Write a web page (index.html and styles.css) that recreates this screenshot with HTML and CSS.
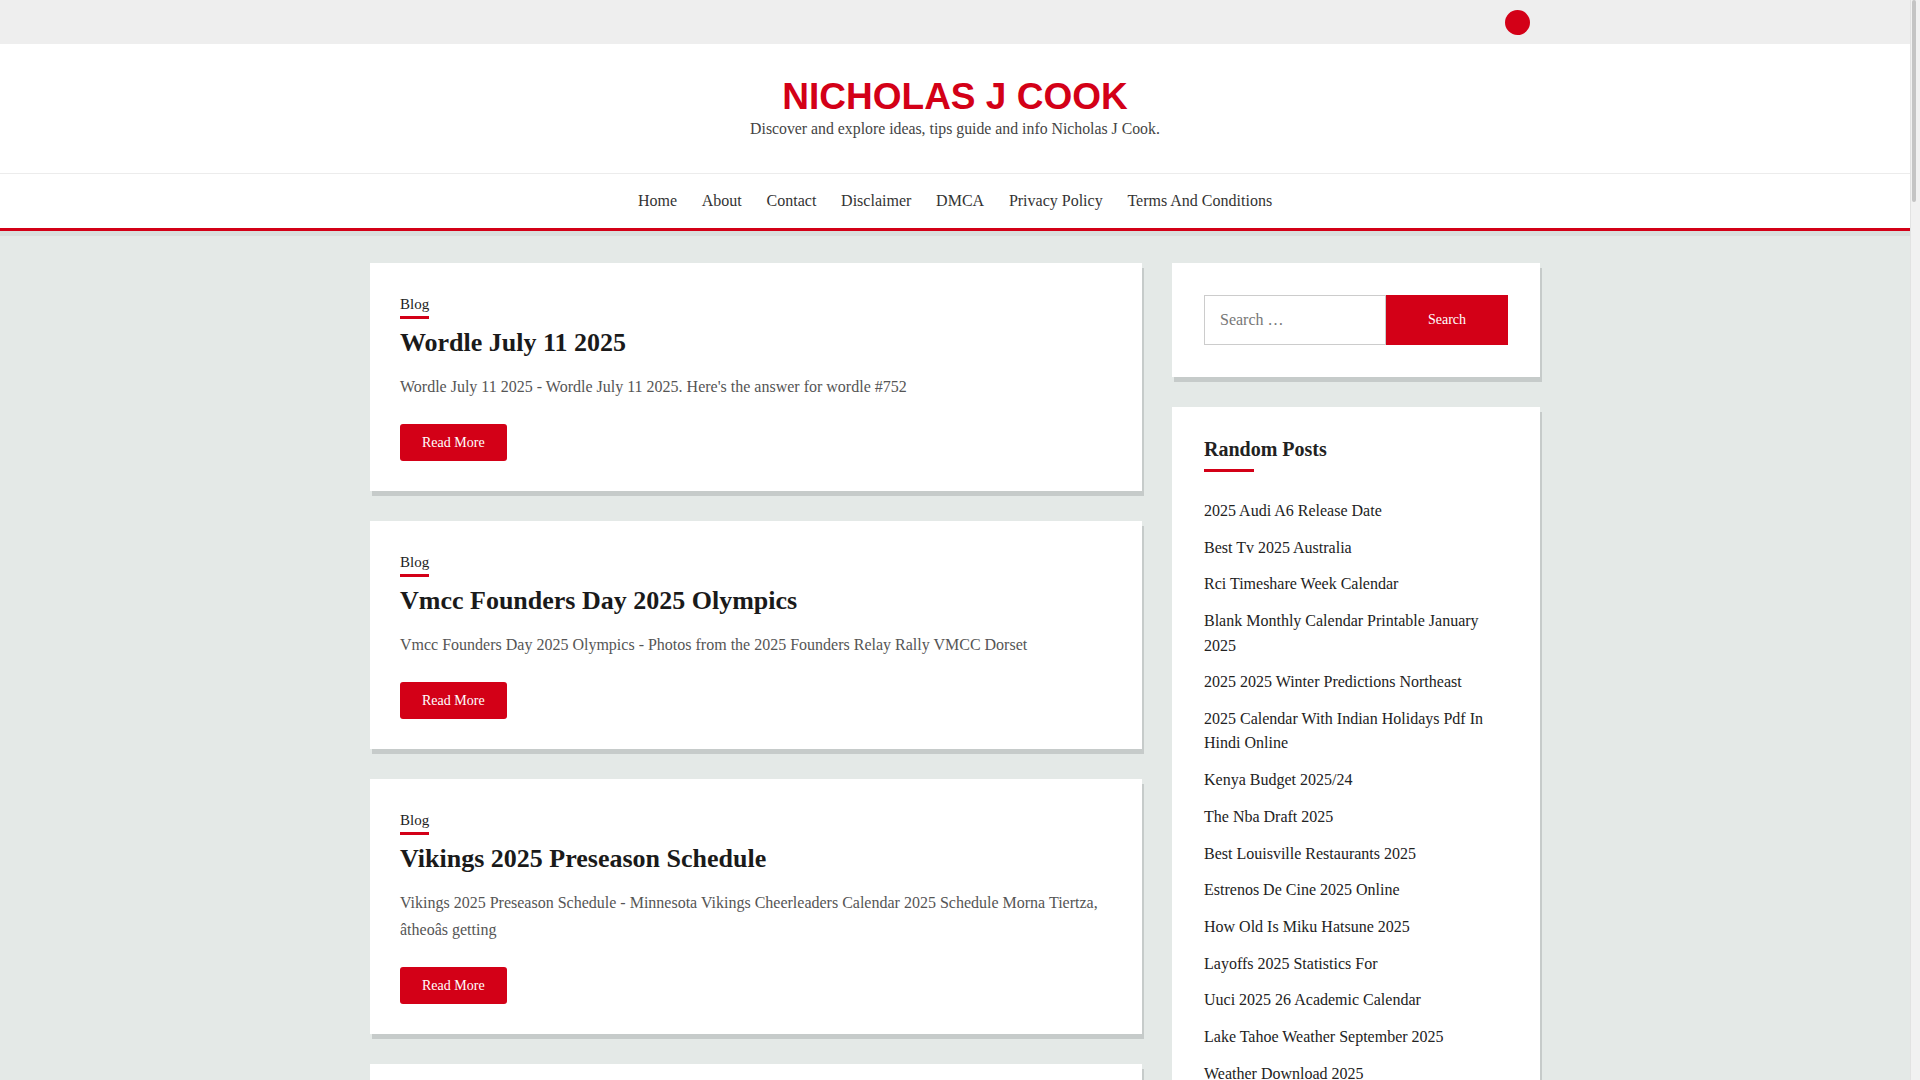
FILE: index.html
```html
<!DOCTYPE html>
<html lang="en">
<head>
<meta charset="utf-8">
<title>Nicholas J Cook</title>
<link rel="stylesheet" href="styles.css">
</head>
<body>
<div class="scrollbar"><span class="scroll-thumb"></span></div>
<div class="topbar">
  <div class="container topbar-inner">
    <span class="dot"></span>
  </div>
</div>
<header class="site-header">
  <h1 class="site-title">NICHOLAS J COOK</h1>
  <p class="site-desc">Discover and explore ideas, tips guide and info Nicholas J Cook.</p>
</header>
<nav class="main-nav">
  <ul>
    <li><a href="#">Home</a></li>
    <li><a href="#">About</a></li>
    <li><a href="#">Contact</a></li>
    <li><a href="#">Disclaimer</a></li>
    <li><a href="#">DMCA</a></li>
    <li><a href="#">Privacy Policy</a></li>
    <li><a href="#">Terms And Conditions</a></li>
  </ul>
</nav>
<div class="container content">
  <main class="posts">
    <article class="card post">
      <div class="meta"><a class="cat" href="#">Blog</a></div>
      <h2 class="post-title">Wordle July 11 2025</h2>
      <p class="excerpt">Wordle July 11 2025 - Wordle July 11 2025. Here's the answer for wordle #752</p>
      <div class="actions"><a class="btn" href="#">Read More</a></div>
    </article>
    <article class="card post">
      <div class="meta"><a class="cat" href="#">Blog</a></div>
      <h2 class="post-title">Vmcc Founders Day 2025 Olympics</h2>
      <p class="excerpt">Vmcc Founders Day 2025 Olympics - Photos from the 2025 Founders Relay Rally VMCC Dorset</p>
      <div class="actions"><a class="btn" href="#">Read More</a></div>
    </article>
    <article class="card post">
      <div class="meta"><a class="cat" href="#">Blog</a></div>
      <h2 class="post-title">Vikings 2025 Preseason Schedule</h2>
      <p class="excerpt">Vikings 2025 Preseason Schedule - Minnesota Vikings Cheerleaders Calendar 2025 Schedule Morna Tiertza, âtheoâs getting</p>
      <div class="actions"><a class="btn" href="#">Read More</a></div>
    </article>
    <article class="card post">
      <div class="meta"><a class="cat" href="#">Blog</a></div>
      <h2 class="post-title">Nfl Week 1 Schedule 2025</h2>
      <p class="excerpt">Nfl Week 1 Schedule 2025 - Full schedule, kickoff times and TV channels for every game</p>
      <div class="actions"><a class="btn" href="#">Read More</a></div>
    </article>
    <article class="card post">
      <div class="meta"><a class="cat" href="#">Blog</a></div>
      <h2 class="post-title">Best Tv 2025 Australia</h2>
      <p class="excerpt">Best Tv 2025 Australia - The best TVs you can buy in Australia this year</p>
      <div class="actions"><a class="btn" href="#">Read More</a></div>
    </article>
    <article class="card post">
      <div class="meta"><a class="cat" href="#">Blog</a></div>
      <h2 class="post-title">Kenya Budget 2025/24</h2>
      <p class="excerpt">Kenya Budget 2025/24 - Highlights of the budget statement read in parliament</p>
      <div class="actions"><a class="btn" href="#">Read More</a></div>
    </article>
    <article class="card post">
      <div class="meta"><a class="cat" href="#">Blog</a></div>
      <h2 class="post-title">The Nba Draft 2025</h2>
      <p class="excerpt">The Nba Draft 2025 - Mock draft, prospects and the full order of picks</p>
      <div class="actions"><a class="btn" href="#">Read More</a></div>
    </article>
    <article class="card post">
      <div class="meta"><a class="cat" href="#">Blog</a></div>
      <h2 class="post-title">Best Louisville Restaurants 2025</h2>
      <p class="excerpt">Best Louisville Restaurants 2025 - Where to eat in Louisville right now</p>
      <div class="actions"><a class="btn" href="#">Read More</a></div>
    </article>
    <article class="card post">
      <div class="meta"><a class="cat" href="#">Blog</a></div>
      <h2 class="post-title">Estrenos De Cine 2025 Online</h2>
      <p class="excerpt">Estrenos De Cine 2025 Online - Las películas más esperadas del año</p>
      <div class="actions"><a class="btn" href="#">Read More</a></div>
    </article>
    <article class="card post">
      <div class="meta"><a class="cat" href="#">Blog</a></div>
      <h2 class="post-title">How Old Is Miku Hatsune 2025</h2>
      <p class="excerpt">How Old Is Miku Hatsune 2025 - Everything you need to know about the virtual singer</p>
      <div class="actions"><a class="btn" href="#">Read More</a></div>
    </article>
    <article class="card post">
      <div class="meta"><a class="cat" href="#">Blog</a></div>
      <h2 class="post-title">Layoffs 2025 Statistics For</h2>
      <p class="excerpt">Layoffs 2025 Statistics For - Tracking layoffs across the tech industry</p>
      <div class="actions"><a class="btn" href="#">Read More</a></div>
    </article>
    <article class="card post">
      <div class="meta"><a class="cat" href="#">Blog</a></div>
      <h2 class="post-title">Uuci 2025 26 Academic Calendar</h2>
      <p class="excerpt">Uuci 2025 26 Academic Calendar - Important dates for the upcoming academic year</p>
      <div class="actions"><a class="btn" href="#">Read More</a></div>
    </article>
    <article class="card post">
      <div class="meta"><a class="cat" href="#">Blog</a></div>
      <h2 class="post-title">Lake Tahoe Weather September 2025</h2>
      <p class="excerpt">Lake Tahoe Weather September 2025 - Average temperatures and what to pack</p>
      <div class="actions"><a class="btn" href="#">Read More</a></div>
    </article>
    <article class="card post">
      <div class="meta"><a class="cat" href="#">Blog</a></div>
      <h2 class="post-title">Weather Download 2025</h2>
      <p class="excerpt">Weather Download 2025 - Forecast highlights and seasonal outlook</p>
      <div class="actions"><a class="btn" href="#">Read More</a></div>
    </article>
    <article class="card post">
      <div class="meta"><a class="cat" href="#">Blog</a></div>
      <h2 class="post-title">2025 Audi A6 Release Date</h2>
      <p class="excerpt">2025 Audi A6 Release Date - Specs, prices and when it arrives in showrooms</p>
      <div class="actions"><a class="btn" href="#">Read More</a></div>
    </article>
    <article class="card post">
      <div class="meta"><a class="cat" href="#">Blog</a></div>
      <h2 class="post-title">Rci Timeshare Week Calendar</h2>
      <p class="excerpt">Rci Timeshare Week Calendar - Find your week number for the year</p>
      <div class="actions"><a class="btn" href="#">Read More</a></div>
    </article>
    <article class="card post">
      <div class="meta"><a class="cat" href="#">Blog</a></div>
      <h2 class="post-title">2025 2025 Winter Predictions Northeast</h2>
      <p class="excerpt">2025 2025 Winter Predictions Northeast - Snowfall outlook for the coming season</p>
      <div class="actions"><a class="btn" href="#">Read More</a></div>
    </article>
    <article class="card post">
      <div class="meta"><a class="cat" href="#">Blog</a></div>
      <h2 class="post-title">Blank Monthly Calendar Printable January 2025</h2>
      <p class="excerpt">Blank Monthly Calendar Printable January 2025 - Free printable templates</p>
      <div class="actions"><a class="btn" href="#">Read More</a></div>
    </article>
    <article class="card post">
      <div class="meta"><a class="cat" href="#">Blog</a></div>
      <h2 class="post-title">2025 Calendar With Indian Holidays Pdf In Hindi Online</h2>
      <p class="excerpt">2025 Calendar With Indian Holidays Pdf In Hindi Online - Download the full list</p>
      <div class="actions"><a class="btn" href="#">Read More</a></div>
    </article>
    <article class="card post">
      <div class="meta"><a class="cat" href="#">Blog</a></div>
      <h2 class="post-title">Vmcc Founders Day 2025</h2>
      <p class="excerpt">Vmcc Founders Day 2025 - Photos and results from the rally</p>
      <div class="actions"><a class="btn" href="#">Read More</a></div>
    </article>
  </main>
  <aside class="sidebar">
    <section class="card widget-search">
      <form class="search-form" action="#">
        <input class="search-field" type="search" placeholder="Search …">
        <button class="search-submit" type="button">Search</button>
      </form>
    </section>
    <section class="card widget-list">
      <h2 class="widget-title">Random Posts</h2>
      <ul class="post-list">
        <li><a href="#">2025 Audi A6 Release Date</a></li>
        <li><a href="#">Best Tv 2025 Australia</a></li>
        <li><a href="#">Rci Timeshare Week Calendar</a></li>
        <li><a href="#">Blank Monthly Calendar Printable January 2025</a></li>
        <li><a href="#">2025 2025 Winter Predictions Northeast</a></li>
        <li><a href="#">2025 Calendar With Indian Holidays Pdf In Hindi Online</a></li>
        <li><a href="#">Kenya Budget 2025/24</a></li>
        <li><a href="#">The Nba Draft 2025</a></li>
        <li><a href="#">Best Louisville Restaurants 2025</a></li>
        <li><a href="#">Estrenos De Cine 2025 Online</a></li>
        <li><a href="#">How Old Is Miku Hatsune 2025</a></li>
        <li><a href="#">Layoffs 2025 Statistics For</a></li>
        <li><a href="#">Uuci 2025 26 Academic Calendar</a></li>
        <li><a href="#">Lake Tahoe Weather September 2025</a></li>
        <li><a href="#">Weather Download 2025</a></li>
        <li><a href="#">Nfl Week 1 Schedule 2025</a></li>
        <li><a href="#">Vikings 2025 Preseason Schedule</a></li>
      </ul>
    </section>
  </aside>
</div>
<footer class="site-footer">
  <p>Copyright © Nicholas J Cook. All rights reserved.</p>
</footer>
</body>
</html>
```
FILE: styles.css
```css
* {
  box-sizing: border-box;
}

html {
  background: #f1f1f1;
}

body {
  margin: 0 10px 0 0;
  background: #e4e9e7;
  font-family: "Liberation Serif", "Times New Roman", serif;
  color: #222;
}

a {
  color: inherit;
  text-decoration: none;
}

/* imitation of the page scrollbar seen at the right edge */
.scrollbar {
  position: fixed;
  top: 0;
  right: 0;
  width: 10px;
  height: 100vh;
  background: #f1f1f1;
  border-left: 1px solid #e2e2e2;
  z-index: 10;
}

.scroll-thumb {
  display: block;
  width: 4px;
  height: 202px;
  margin-left: 1px;
  background: #c4c4c4;
  border-radius: 2px;
}

.container {
  width: 1170px;
  margin: 0 auto;
}

/* top bar */
.topbar {
  background: #eeeeee;
  height: 44px;
}

.topbar-inner {
  height: 100%;
  display: flex;
  justify-content: flex-end;
  align-items: center;
  padding-right: 10px;
}

.dot {
  width: 25px;
  height: 25px;
  border-radius: 50%;
  background: #d30017;
}

/* header */
.site-header {
  background: #fff;
  text-align: center;
  padding: 31px 0 34px;
}

.site-title {
  margin: 0;
  font: bold 37px/44px "Liberation Sans", Arial, sans-serif;
  color: #d30017;
}

.site-desc {
  margin: 0;
  font-size: 15.8px;
  line-height: 20px;
  color: #444;
}

/* navigation */
.main-nav {
  background: #fff;
  border-top: 1px solid #ececec;
  border-bottom: 3px solid #d30017;
  box-shadow: 0 5px 0 #d9dfdd;
}

.main-nav ul {
  list-style: none;
  margin: 0;
  padding: 0;
  display: flex;
  justify-content: center;
}

.main-nav a {
  display: block;
  padding: 0 12.4px;
  line-height: 54px;
  font-size: 16px;
  color: #333;
}

/* content */
.content {
  display: flex;
  align-items: flex-start;
  gap: 30px;
  padding-top: 32px;
}

.posts {
  width: 772px;
  flex: none;
}

.sidebar {
  width: 368px;
  flex: none;
}

.card {
  background: #fff;
  box-shadow: 2px 5px 0 #c6cbca;
  margin-bottom: 30px;
}

.post {
  padding: 30px;
}

.meta {
  display: flex;
}

.cat {
  display: block;
  font-size: 15px;
  line-height: 22px;
  padding-bottom: 1px;
  border-bottom: 3px solid #d30017;
  color: #222;
}

.post-title {
  margin: 7px 0 0;
  font-size: 26px;
  line-height: 34px;
  font-weight: bold;
  color: #1a1a1a;
}

.excerpt {
  margin: 13px 0 0;
  font-size: 16px;
  line-height: 27px;
  color: #555;
}

.actions {
  display: flex;
  margin-top: 24px;
}

.btn {
  display: block;
  height: 37px;
  line-height: 37px;
  padding: 0 22px;
  background: #d30017;
  color: #fff;
  border-radius: 3px;
  font-size: 14px;
}

/* sidebar */
.widget-search {
  padding: 32px;
}

.search-form {
  display: flex;
}

.search-field {
  flex: 1;
  min-width: 0;
  height: 50px;
  border: 1px solid #cccccc;
  padding: 0 15px;
  font: 16px "Liberation Serif", serif;
  color: #333;
  outline: none;
  border-radius: 0;
}

.search-field::placeholder {
  color: #777;
}

.search-submit {
  width: 122px;
  height: 50px;
  border: none;
  background: #d30017;
  color: #fff;
  font: 14px "Liberation Serif", serif;
  border-radius: 0;
}

.widget-list {
  padding: 30px 32px;
}

.widget-title {
  margin: 0;
  font-size: 20px;
  line-height: 24px;
  font-weight: bold;
  color: #222;
}

.widget-title::after {
  content: "";
  display: block;
  width: 50px;
  height: 3px;
  margin-top: 8px;
  background: #d30017;
}

.post-list {
  list-style: none;
  margin: 27px 0 0;
  padding: 0;
  display: flex;
  flex-direction: column;
  gap: 12.2px;
}

.post-list li {
  font-size: 16px;
  line-height: 24.5px;
  color: #222;
}

/* footer */
.site-footer {
  background: #fff;
  text-align: center;
  padding: 30px 0;
  margin-top: 10px;
  font-size: 15px;
  color: #555;
}

.site-footer p {
  margin: 0;
}
```
